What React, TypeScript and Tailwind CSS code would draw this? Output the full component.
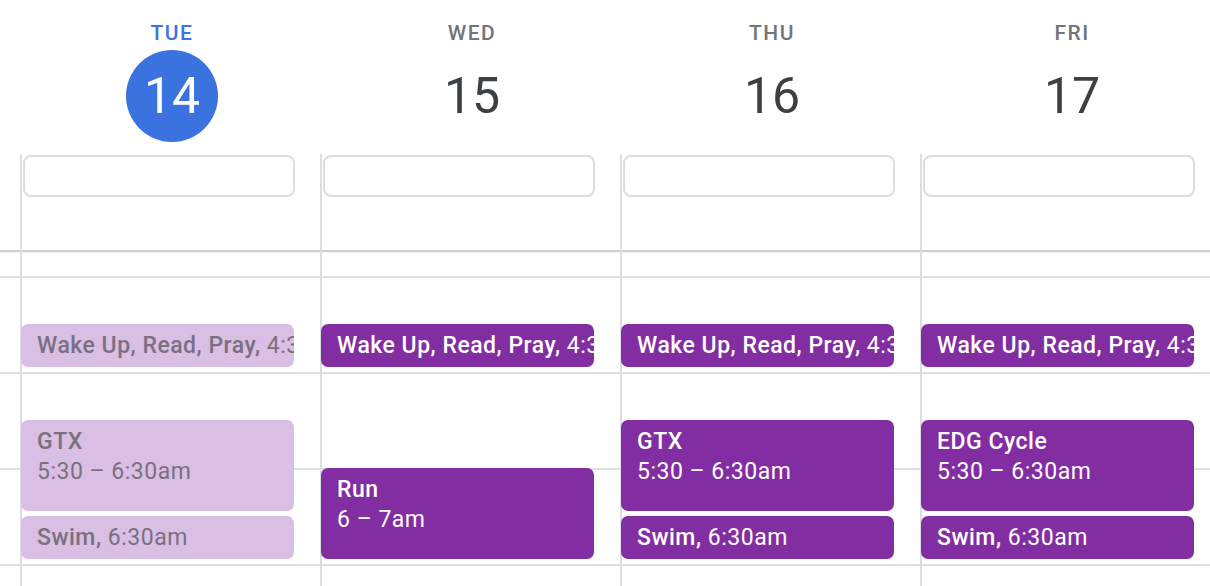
import React from 'react';

type CalEvent = {
  title: string;
  time: string;
  top: number;
  height: number;
  inline?: boolean;
};

type Day = {
  label: string;
  date: number;
  today?: boolean;
  faded?: boolean;
  events: CalEvent[];
};

const days: Day[] = [
  {
    label: 'TUE',
    date: 14,
    today: true,
    faded: true,
    events: [
      { title: 'Wake Up, Read, Pray', time: '4:30am', top: 74, height: 43, inline: true },
      { title: 'GTX', time: '5:30 – 6:30am', top: 170, height: 91 },
      { title: 'Swim', time: '6:30am', top: 266, height: 43, inline: true },
    ],
  },
  {
    label: 'WED',
    date: 15,
    events: [
      { title: 'Wake Up, Read, Pray', time: '4:30am', top: 74, height: 43, inline: true },
      { title: 'Run', time: '6 – 7am', top: 218, height: 91 },
    ],
  },
  {
    label: 'THU',
    date: 16,
    events: [
      { title: 'Wake Up, Read, Pray', time: '4:30am', top: 74, height: 43, inline: true },
      { title: 'GTX', time: '5:30 – 6:30am', top: 170, height: 91 },
      { title: 'Swim', time: '6:30am', top: 266, height: 43, inline: true },
    ],
  },
  {
    label: 'FRI',
    date: 17,
    events: [
      { title: 'Wake Up, Read, Pray', time: '4:30am', top: 74, height: 43, inline: true },
      { title: 'EDG Cycle', time: '5:30 – 6:30am', top: 170, height: 91 },
      { title: 'Swim', time: '6:30am', top: 266, height: 43, inline: true },
    ],
  },
];

// hour slots below the all-day strip: a partial 3am row, then full hours
function HourRows() {
  return (
    <>
      <div className="h-[2px] bg-[#cfd0d3]" />
      <div className="h-[26px] border-b-2 border-[#e0e1e4] shadow-[inset_0_2px_2px_-1px_rgba(0,0,0,0.06)]" />
      <div className="h-[96px] border-b-2 border-[#e0e1e4]" />
      <div className="h-[96px] border-b-2 border-[#e0e1e4]" />
      <div className="h-[96px] border-b-2 border-[#e0e1e4]" />
      <div className="h-[96px]" />
    </>
  );
}

function EventChip({ ev, faded }: { ev: CalEvent; faded?: boolean }) {
  const colors = faded ? 'bg-[#d9bfe3] text-[#7a7081]' : 'bg-[#832da2] text-white';
  return (
    <div
      className={`absolute left-[-1px] w-[273px] rounded-[7px] overflow-hidden whitespace-nowrap pl-[16px] pt-[7px] text-[23px] leading-[30px] tracking-[0.5px] ${colors}`}
      style={{ top: ev.top, height: ev.height }}
    >
      {ev.inline ? (
        <div>
          <span className="font-medium">{ev.title},</span> {ev.time}
        </div>
      ) : (
        <>
          <div className="font-medium">{ev.title}</div>
          <div>{ev.time}</div>
        </>
      )}
    </div>
  );
}

export default function App() {
  return (
    <div className="w-[1210px] h-[586px] overflow-hidden bg-white font-['Roboto',sans-serif]">
      <div className="flex h-[154px] pl-[22px]">
        {days.map((d) => (
          <div key={d.label} className="w-[300px] shrink-0 flex flex-col items-center pt-[22px]">
            <div
              className={`text-[21px] leading-[22px] font-medium tracking-[1.5px] ${
                d.today ? 'text-[#3b74e0]' : 'text-[#70757a]'
              }`}
            >
              {d.label}
            </div>
            <div
              className={`mt-[6px] w-[92px] h-[92px] rounded-full flex items-center justify-center text-[50px] leading-none ${
                d.today ? 'bg-[#3a73e0] text-white' : 'text-[#3c4043]'
              }`}
            >
              {d.date}
            </div>
          </div>
        ))}
      </div>

      <div className="flex">
        <div className="w-[20px] shrink-0 flex flex-col">
          <div className="h-[96px]" />
          <HourRows />
        </div>
        {days.map((d) => (
          <div key={d.label} className="w-[300px] shrink-0 flex flex-col border-l-2 border-[#dcdde0]">
            <div className="h-[96px]">
              <div className="ml-[1px] mt-[1px] w-[272px] h-[42px] rounded-[8px] border-2 border-[#dcdde0]" />
            </div>
            <div className="relative flex flex-col">
              <HourRows />
              {d.events.map((ev, i) => (
                <EventChip key={i} ev={ev} faded={d.faded} />
              ))}
            </div>
          </div>
        ))}
      </div>
    </div>
  );
}
